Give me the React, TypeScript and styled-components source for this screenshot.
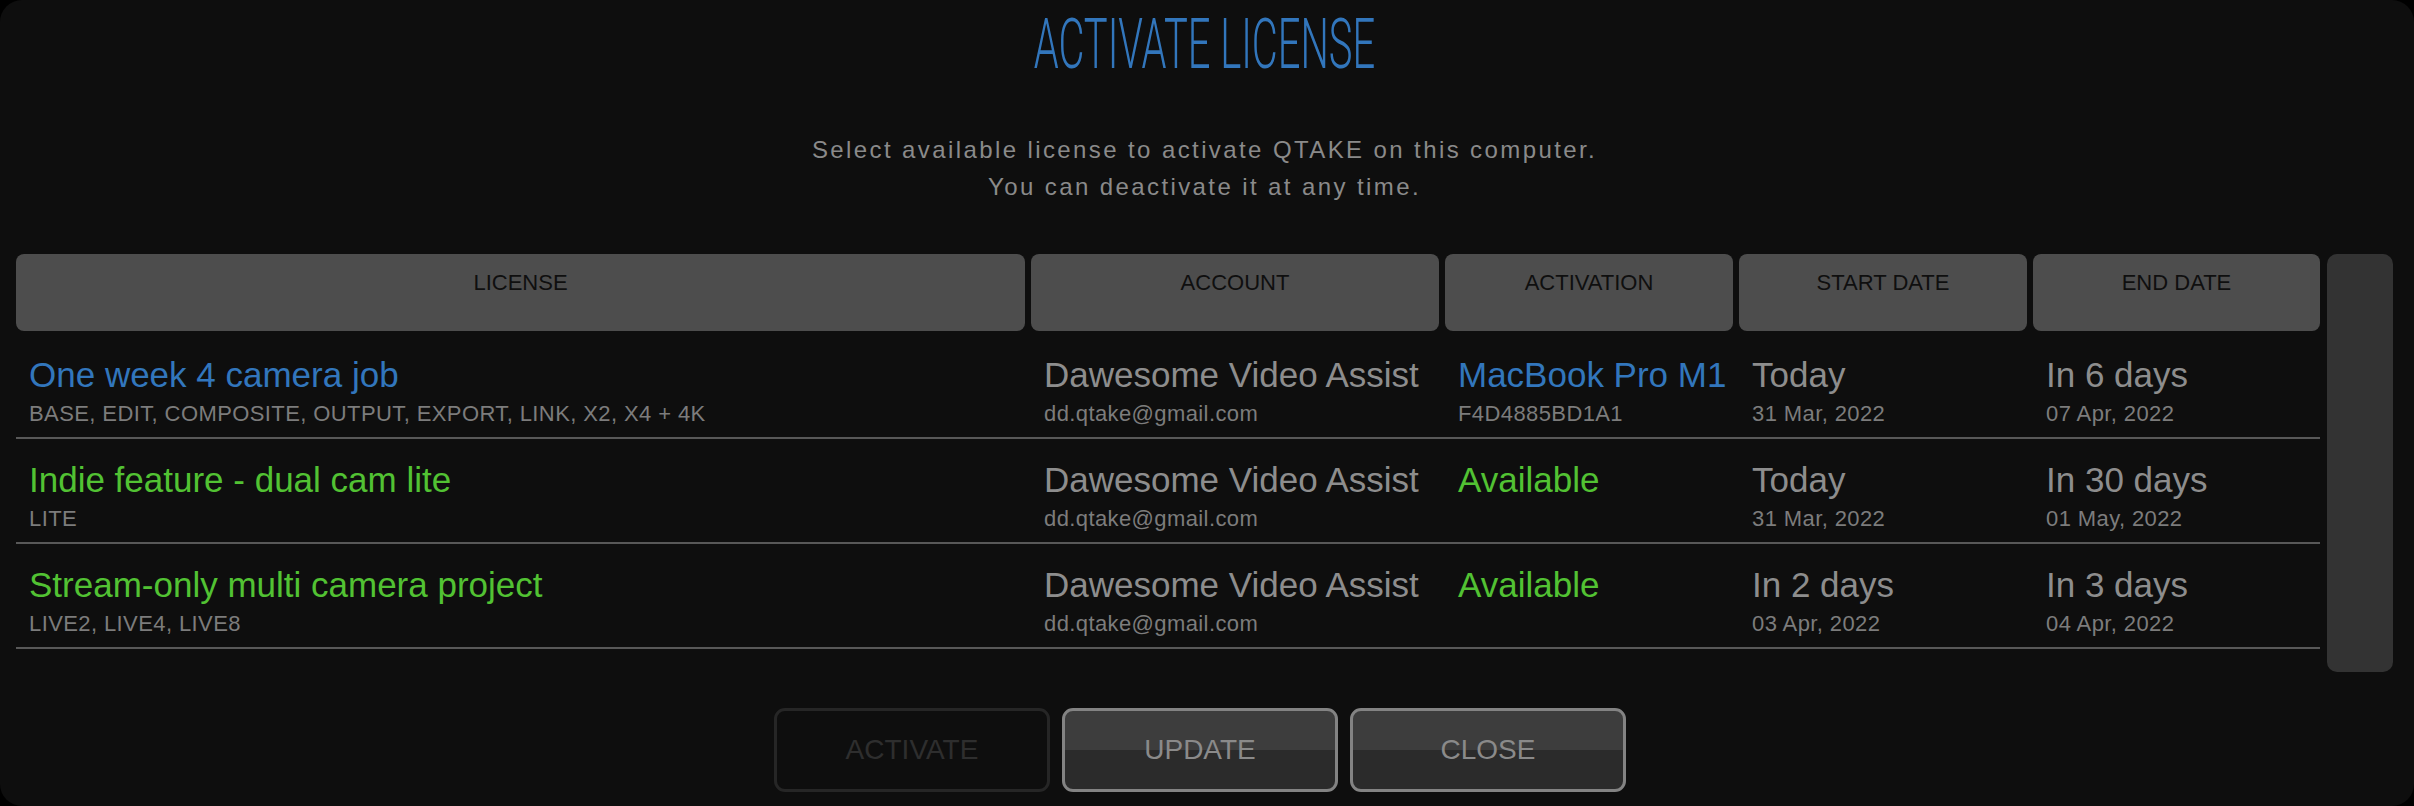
import React from 'react';
import styled, { createGlobalStyle } from 'styled-components';

const BLUE = '#3276bc';
const GREEN = '#52c233';
const GRAY = '#8d8d8d';
const SUBGRAY = '#7c7c7c';

const GlobalStyle = createGlobalStyle`
  html, body { margin: 0; padding: 0; background: #000; }
  body { font-family: "Liberation Sans", Arial, sans-serif; }
`;

const Panel = styled.div`
  box-sizing: border-box;
  width: 2414px;
  height: 806px;
  background: #0e0e0e;
  border-radius: 22px;
  padding: 9px 21px 0 16px;
  display: flex;
  flex-direction: column;
`;

const Title = styled.h1`
  margin: 0;
  text-align: center;
  font-family: Roboto, "Liberation Sans", Arial, sans-serif;
  font-size: 70px;
  line-height: 70px;
  font-weight: 300;
  color: ${BLUE};
`;

const TitleText = styled.span`
  display: inline-block;
  transform: scaleX(0.57);
`;

const Subtitle = styled.p`
  margin: 52px 0 0;
  text-align: center;
  font-size: 24px;
  line-height: 37px;
  letter-spacing: 2.4px;
  color: #8a8a8a;
`;

const TableArea = styled.div`
  margin-top: 49px;
  height: 418px;
  display: flex;
  gap: 7px;
`;

const Table = styled.div`
  flex: 1;
  display: flex;
  flex-direction: column;
`;

const columns = '1009px 408px 288px 288px 287px';

const HeaderRow = styled.div`
  display: grid;
  grid-template-columns: ${columns};
  column-gap: 6px;
  height: 77px;
`;

const HeaderCell = styled.div`
  box-sizing: border-box;
  background: #4d4d4d;
  border-radius: 8px;
  padding-top: 16px;
  text-align: center;
  font-size: 22px;
  line-height: 26px;
  color: #0f0f0f;
`;

const Body = styled.div`
  margin-top: 3px;
  display: flex;
  flex-direction: column;
`;

const Row = styled.div`
  box-sizing: border-box;
  display: grid;
  grid-template-columns: ${columns};
  column-gap: 6px;
  height: 105px;
  padding: 21px 0 10px;
  border-bottom: 2px solid #585858;
`;

const Cell = styled.div`
  padding-left: 13px;
  display: flex;
  flex-direction: column;
  gap: 6px;
  min-width: 0;
`;

const Primary = styled.div<{ $color: string }>`
  font-size: 35px;
  line-height: 40px;
  color: ${(p) => p.$color};
  white-space: nowrap;
`;

const Secondary = styled.div`
  font-size: 22px;
  line-height: 26px;
  letter-spacing: 0.4px;
  color: ${SUBGRAY};
  white-space: nowrap;
`;

const Scrollbar = styled.div`
  width: 66px;
  background: #333;
  border-radius: 10px;
`;

const ButtonRow = styled.div`
  margin-top: 36px;
  display: flex;
  justify-content: center;
  gap: 12px;
  padding-right: 9px;
`;

const Button = styled.button<{ $disabled?: boolean }>`
  box-sizing: border-box;
  width: 276px;
  height: 84px;
  border-radius: 11px;
  font-family: "Liberation Sans", Arial, sans-serif;
  font-size: 28px;
  display: flex;
  align-items: center;
  justify-content: center;
  padding: 0;
  cursor: pointer;
  border: 3px solid ${(p) => (p.$disabled ? '#262626' : '#838383')};
  color: ${(p) => (p.$disabled ? '#2e2e2e' : '#8a8a8a')};
  background: ${(p) =>
    p.$disabled ? '#0e0e0e' : 'linear-gradient(to bottom, #3d3d3d 0%, #3d3d3d 50%, #2b2b2b 50%, #2b2b2b 100%)'};
`;

type License = {
  name: string;
  nameColor: string;
  modules: string;
  account: string;
  email: string;
  activation: string;
  activationColor: string;
  activationSub: string;
  start: string;
  startSub: string;
  end: string;
  endSub: string;
};

const licenses: License[] = [
  {
    name: 'One week 4 camera job',
    nameColor: BLUE,
    modules: 'BASE, EDIT, COMPOSITE, OUTPUT, EXPORT, LINK, X2, X4 + 4K',
    account: 'Dawesome Video Assist',
    email: 'dd.qtake@gmail.com',
    activation: 'MacBook Pro M1',
    activationColor: BLUE,
    activationSub: 'F4D4885BD1A1',
    start: 'Today',
    startSub: '31 Mar, 2022',
    end: 'In 6 days',
    endSub: '07 Apr, 2022',
  },
  {
    name: 'Indie feature - dual cam lite',
    nameColor: GREEN,
    modules: 'LITE',
    account: 'Dawesome Video Assist',
    email: 'dd.qtake@gmail.com',
    activation: 'Available',
    activationColor: GREEN,
    activationSub: '',
    start: 'Today',
    startSub: '31 Mar, 2022',
    end: 'In 30 days',
    endSub: '01 May, 2022',
  },
  {
    name: 'Stream-only multi camera project',
    nameColor: GREEN,
    modules: 'LIVE2, LIVE4, LIVE8',
    account: 'Dawesome Video Assist',
    email: 'dd.qtake@gmail.com',
    activation: 'Available',
    activationColor: GREEN,
    activationSub: '',
    start: 'In 2 days',
    startSub: '03 Apr, 2022',
    end: 'In 3 days',
    endSub: '04 Apr, 2022',
  },
];

const headers = ['LICENSE', 'ACCOUNT', 'ACTIVATION', 'START DATE', 'END DATE'];

export default function App() {
  return (
    <>
      <GlobalStyle />
      <Panel>
        <Title>
          <TitleText>ACTIVATE LICENSE</TitleText>
        </Title>
        <Subtitle>
          Select available license to activate QTAKE on this computer.
          <br />
          You can deactivate it at any time.
        </Subtitle>
        <TableArea>
          <Table>
            <HeaderRow>
              {headers.map((h) => (
                <HeaderCell key={h}>{h}</HeaderCell>
              ))}
            </HeaderRow>
            <Body>
              {licenses.map((l) => (
                <Row key={l.name}>
                  <Cell>
                    <Primary $color={l.nameColor}>{l.name}</Primary>
                    <Secondary>{l.modules}</Secondary>
                  </Cell>
                  <Cell>
                    <Primary $color={GRAY}>{l.account}</Primary>
                    <Secondary>{l.email}</Secondary>
                  </Cell>
                  <Cell>
                    <Primary $color={l.activationColor}>{l.activation}</Primary>
                    <Secondary>{l.activationSub}</Secondary>
                  </Cell>
                  <Cell>
                    <Primary $color={GRAY}>{l.start}</Primary>
                    <Secondary>{l.startSub}</Secondary>
                  </Cell>
                  <Cell>
                    <Primary $color={GRAY}>{l.end}</Primary>
                    <Secondary>{l.endSub}</Secondary>
                  </Cell>
                </Row>
              ))}
            </Body>
          </Table>
          <Scrollbar />
        </TableArea>
        <ButtonRow>
          <Button $disabled>ACTIVATE</Button>
          <Button>UPDATE</Button>
          <Button>CLOSE</Button>
        </ButtonRow>
      </Panel>
    </>
  );
}
